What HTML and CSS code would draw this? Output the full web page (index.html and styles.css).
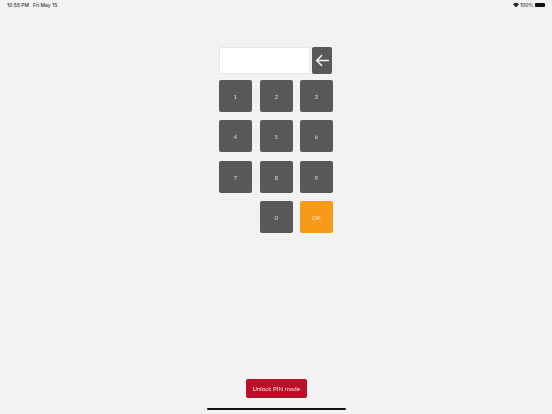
FILE: index.html
```html
<!DOCTYPE html>
<html lang="en">
<head>
<meta charset="utf-8">
<title>Unlock PIN</title>
<link rel="stylesheet" href="styles.css">
</head>
<body>
<div class="screen">
  <header class="status">
    <div class="status-left"><span>10:55 PM</span><span>Fri May 15</span></div>
    <div class="status-right">
      <svg class="wifi" viewBox="0 0 16 12" width="6" height="4.5"><path d="M8 12 L0 3.6 C4.4 -1.2 11.6 -1.2 16 3.6 Z" fill="#222"/></svg>
      <span>100%</span>
      <span class="battery"></span>
    </div>
  </header>
  <main class="pad">
    <div class="entry">
      <div class="field"></div>
      <button class="back" aria-label="Backspace">
        <svg viewBox="0 0 16 14" width="15" height="13"><path d="M15 7H2M7.5 1.2 1.7 7l5.8 5.8" fill="none" stroke="#f2f2f2" stroke-width="1.6"/></svg>
      </button>
    </div>
    <div class="keys">
      <button class="key">1</button>
      <button class="key">2</button>
      <button class="key">3</button>
      <button class="key">4</button>
      <button class="key">5</button>
      <button class="key">6</button>
      <button class="key">7</button>
      <button class="key">8</button>
      <button class="key">9</button>
      <span></span>
      <button class="key">0</button>
      <button class="key ok">OK</button>
    </div>
  </main>
  <footer class="foot">
    <button class="unlock">Unlock PIN mode</button>
    <div class="home"></div>
  </footer>
</div>
</body>
</html>
```
FILE: styles.css
```css
* { box-sizing: border-box; }
html, body { margin: 0; height: 100%; }
body { background: #f2f2f2; font-family: Inter, "Liberation Sans", Arial, sans-serif; overflow: hidden; }
button { font-family: inherit; border: 0; padding: 0; margin: 0; }
.screen { width: 552px; height: 414px; display: flex; flex-direction: column; }
.status { height: 10px; padding: 0 7px; display: flex; justify-content: space-between; align-items: center; font-size: 5px; font-weight: 500; color: #333; flex: none; }
.status-left { display: flex; gap: 4px; }
.status-right { display: flex; align-items: center; gap: 1.5px; }
.battery { width: 10px; height: 4.5px; background: #111; border-radius: 1px; }
.pad { width: 113.1px; margin: 37px 0 0 219.4px; flex: none; }
.entry { display: flex; justify-content: space-between; height: 26.5px; }
.field { width: 91px; background: #fff; border: 0.5px solid #e6e6e6; border-radius: 2px; }
.back { width: 20.5px; background: #575958; border-radius: 2px; display: flex; align-items: center; justify-content: center; }
.keys { display: grid; grid-template-columns: repeat(3, 32.5px); grid-auto-rows: 32.3px; justify-content: space-between; row-gap: 8px; margin-top: 6.5px; }
.key { background: #575958; color: #d8d8d8; font-family: Lato, sans-serif; font-size: 6.3px; border-radius: 2px; will-change: transform; }
.ok { background: #f79a1a; color: #fde2bd; }
.foot { margin-top: auto; display: flex; flex-direction: column; align-items: center; flex: none; }
.unlock { width: 60.5px; height: 18.5px; background: #b91127; color: #f6dfe1; font-family: Lato, sans-serif; font-size: 6.2px; border-radius: 2px; will-change: transform; }
.home { width: 139px; height: 2px; background: #111; border-radius: 1px; margin-top: 10.5px; margin-bottom: 4px; }
```
